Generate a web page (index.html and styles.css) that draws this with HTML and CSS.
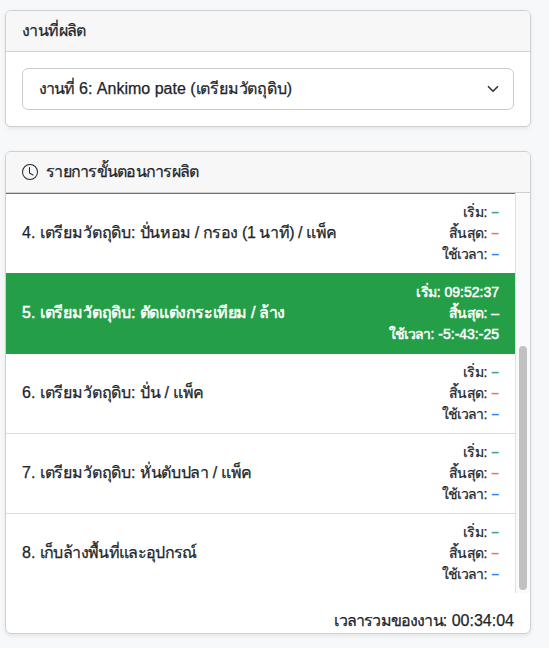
FILE: index.html
```html
<!DOCTYPE html>
<html lang="th"><head><meta charset="utf-8"><title>งานที่ผลิต</title><link rel="stylesheet" href="styles.css"></head>
<body>
<section class="card job">
<h2 class="head"><span class="t-job">งานที่ผลิต</span></h2>
<div class="body"><div class="select"><span><span class="t-work">งานที่</span> 6: Ankimo pate (<span class="prep">เตรียมวัตถุดิบ</span>)</span>
<svg width="12" height="12" viewBox="0 0 16 16" fill="none" stroke="#343a40" stroke-width="2.3" stroke-linecap="round" stroke-linejoin="round"><path d="m2 5 6 6 6-6"/></svg></div></div>
</section>
<section class="card steps">
<h2 class="head"><svg width="16" height="16" viewBox="0 0 16 16" fill="currentColor"><path d="M8 3.5a.5.5 0 0 0-1 0V9a.5.5 0 0 0 .252.434l3.5 2a.5.5 0 0 0 .496-.868L8 8.71z"/><path d="M8 16A8 8 0 1 0 8 0a8 8 0 0 0 0 16m7-8A7 7 0 1 1 1 8a7 7 0 0 1 14 0"/></svg><span class="t-steps">รายการขั้นตอนการผลิต</span></h2>
<div class="scroll"><div class="list">
<div class="row edge"><span class="name">4. <span class="prep">เตรียมวัตถุดิบ</span>: <span class="n4">ปั่นหอม / กรอง (1 นาที) / แพ็ค</span></span><div class="times"><span><i class="start">เริ่ม</i>: <b class="g">–</b></span><span><i class="end">สิ้นสุด</i>: <b class="r">–</b></span><span><i class="used">ใช้เวลา</i>: <b class="b">–</b></span></div></div>
<div class="row edge active"><span class="name">5. <span class="prep">เตรียมวัตถุดิบ</span>: <span class="n5">ตัดแต่งกระเทียม / ล้าง</span></span><div class="times"><span><i class="start">เริ่ม</i>: 09:52:37</span><span><i class="end">สิ้นสุด</i>: –</span><span><i class="used">ใช้เวลา</i>: -5:-43:-25</span></div></div>
<div class="row edge"><span class="name">6. <span class="prep">เตรียมวัตถุดิบ</span>: <span class="n6">ปั่น / แพ็ค</span></span><div class="times"><span><i class="start">เริ่ม</i>: <b class="g">–</b></span><span><i class="end">สิ้นสุด</i>: <b class="r">–</b></span><span><i class="used">ใช้เวลา</i>: <b class="b">–</b></span></div></div>
<div class="row"><span class="name">7. <span class="prep">เตรียมวัตถุดิบ</span>: <span class="n7">หั่นตับปลา / แพ็ค</span></span><div class="times"><span><i class="start">เริ่ม</i>: <b class="g">–</b></span><span><i class="end">สิ้นสุด</i>: <b class="r">–</b></span><span><i class="used">ใช้เวลา</i>: <b class="b">–</b></span></div></div>
<div class="row"><span class="name">8. <span class="n8">เก็บล้างพื้นที่และอุปกรณ์</span></span><div class="times"><span><i class="start">เริ่ม</i>: <b class="g">–</b></span><span><i class="end">สิ้นสุด</i>: <b class="r">–</b></span><span><i class="used">ใช้เวลา</i>: <b class="b">–</b></span></div></div>
</div><div class="track"><div class="thumb"></div></div></div>
<div class="total"><span><span class="t-total">เวลารวมของงาน</span>: 00:34:04</span></div>
</section>
</body></html>
```
FILE: styles.css
```css
*{box-sizing:border-box}
body{margin:0;padding:10px 0 0 5px;height:648px;overflow:hidden;background:#f7f8fa;color:#212529;font:16px/24px "Liberation Sans","Noto Sans",sans-serif;-webkit-text-stroke:.25px currentColor}
.card{width:526px;background:#fff;border:1px solid #cfd0d1;border-radius:6px;box-shadow:0 2px 4px rgba(0,0,0,.075);overflow:hidden}
.job{height:117px}
.steps{height:483px;margin-top:24px}
.head{margin:0;height:41px;padding:0 16px;display:flex;align-items:center;gap:8px;background:#f7f7f7;border-bottom:1px solid #cfd0d1;font-size:16px;font-weight:400;white-space:nowrap}
.head svg{-webkit-text-stroke:0}
.t-job{letter-spacing:-.6px}
.t-steps{letter-spacing:-.75px}
.body{padding:16px}
.select{height:42px;border:1px solid #c9ccd3;border-radius:6px;padding:0 14px 0 16px;display:flex;align-items:center;justify-content:space-between;white-space:nowrap}
.t-work{letter-spacing:-.85px}
.prep{letter-spacing:-.18px}
.n4{letter-spacing:-.43px}
.n5{letter-spacing:-.42px}
.n6{letter-spacing:-.25px}
.n7{letter-spacing:-.33px}
.n8{letter-spacing:-.65px}
.scroll{display:flex;height:400px}
.list{width:509px}
.row{height:80px;padding:0 16px;display:flex;align-items:center;justify-content:space-between;border-top:1px solid #dbdcdd;white-space:nowrap}
.edge{border-top-color:#259e48}
.name{padding-bottom:2px}
.times{display:flex;flex-direction:column;align-items:flex-end;font-size:14px;line-height:21px}
.times b{font-weight:700;-webkit-text-stroke:0}
.times i{font-style:normal}
.start{letter-spacing:-.5px}
.end{letter-spacing:-.65px}
.used{letter-spacing:-.9px}
.g{color:#459b76}.r{color:#e86e79}.b{color:#3b82fb}
.active{background:#259e48;color:#fff;-webkit-text-stroke:.5px currentColor}
.track{width:15px;background:#fafafa;border-left:1px solid #e0e0e0;padding:153px 3px 0}
.thumb{width:8px;height:244px;border-radius:4px;background:#c1c1c1}
.total{display:flex;justify-content:flex-end;padding:16px 16px 0;white-space:nowrap}
.t-total{letter-spacing:-.82px}
```
